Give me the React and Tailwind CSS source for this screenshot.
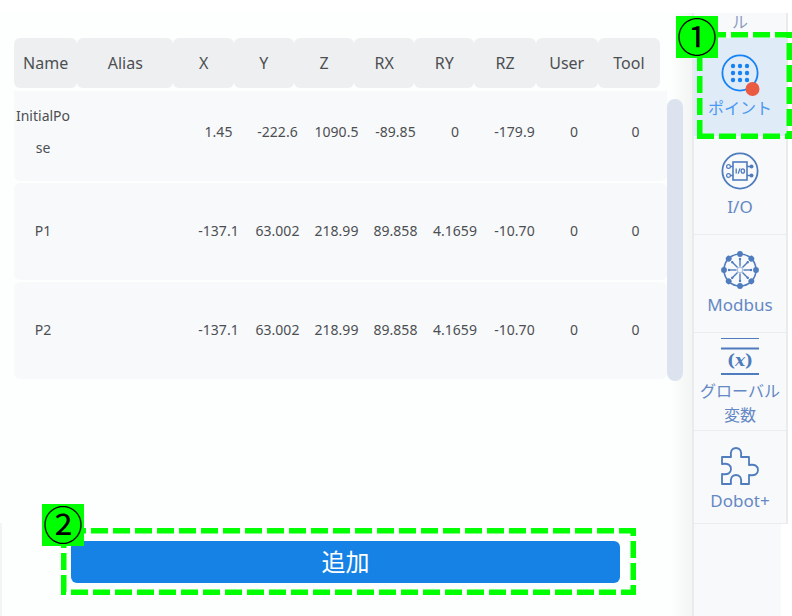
import clsx from 'clsx'

const COLUMNS = ['Name', 'Alias', 'X', 'Y', 'Z', 'RX', 'RY', 'RZ', 'User', 'Tool']

const POINTS = [
  { name: 'InitialPose', values: ['', '1.45', '-222.6', '1090.5', '-89.85', '0', '-179.9', '0', '0'] },
  { name: 'P1', values: ['', '-137.1', '63.002', '218.99', '89.858', '4.1659', '-10.70', '0', '0'] },
  { name: 'P2', values: ['', '-137.1', '63.002', '218.99', '89.858', '4.1659', '-10.70', '0', '0'] },
]

function PointIcon() {
  const steps = [-7, 0, 7]
  return (
    <svg width="38" height="38" viewBox="-19 -19 38 38" className="overflow-visible" aria-hidden="true">
      <circle r="17.6" fill="none" stroke="#1683f5" strokeWidth="1.8" />
      {steps.map((y) => steps.map((x) => <circle key={`${x},${y}`} cx={x} cy={y} r="2.2" fill="#1683f5" />))}
      <circle cx="12.5" cy="16" r="7" fill="#ea5b43" />
    </svg>
  )
}

function IoIcon() {
  return (
    <svg width="38" height="38" viewBox="-19 -19 38 38" fill="none" stroke="#4f7cbd" strokeWidth="1.5" aria-hidden="true">
      <circle r="17.6" strokeWidth="1.8" />
      <rect x="-7" y="-9" width="14" height="18" strokeWidth="1.6" />
      <path d="M-9.5 -4.5H-7M-9.5 4.5H-7M7 -4.5H11M7 4.5H11" />
      <circle cx="-11.5" cy="-4.5" r="1.9" strokeWidth="1.2" />
      <circle cx="-11.5" cy="4.5" r="1.9" strokeWidth="1.2" />
      <circle cx="11.5" cy="-4.5" r="2" fill="#4f7cbd" stroke="none" />
      <circle cx="11.5" cy="4.5" r="2" fill="#4f7cbd" stroke="none" />
      <path d="M-3.8 -2.6V2.6M-1.8 2.6L0 -2.6" strokeWidth="1.3" />
      <ellipse cx="2.8" rx="1.7" ry="2.2" strokeWidth="1.3" />
    </svg>
  )
}

function ModbusIcon() {
  const angles = [0, 45, 90, 135, 180, 225, 270, 315]
  return (
    <svg width="38" height="38" viewBox="-19 -19 38 38" fill="none" stroke="#4f7cbd" aria-hidden="true">
      <circle r="16" strokeWidth="1.6" />
      {angles.map((a) => (
        <g key={a} transform={`rotate(${a})`}>
          <path d="M3.5 0H11.5" strokeWidth="1.4" />
          <circle cx="11" r="1.2" fill="#4f7cbd" stroke="none" />
          <circle cx="16" r="2.9" fill="#4f7cbd" stroke="none" />
        </g>
      ))}
      <circle r="2.8" strokeWidth="0.5" />
    </svg>
  )
}

function VariableIcon() {
  return (
    <svg width="38" height="38" viewBox="0 0 38 38" stroke="#4f7cbd" aria-hidden="true">
      <path d="M0 1.5H38" strokeWidth="1.2" />
      <path d="M0 11.5H38M0 37H38" strokeWidth="2" />
      <text
        x="19"
        y="29"
        textAnchor="middle"
        fill="#4f7cbd"
        stroke="none"
        className="font-['DejaVu_Serif',serif] text-[17px] font-bold"
      >
        (<tspan fontStyle="italic">x</tspan>)
      </text>
    </svg>
  )
}

function PuzzleIcon() {
  return (
    <svg width="38" height="38" viewBox="0 0 38 38" fill="none" stroke="#4f7cbd" strokeWidth="1.8" strokeLinejoin="round" aria-hidden="true">
      <path d="M1 10H10C9 4 11 1 15 1S21 4 20 10H28V18C34 17 37 19 37 23S34 29 28 28V37H20C21 31 19 28 15 28S9 31 10 37H1V27C7 28 10 26 10 22S7 16 1 17Z" />
    </svg>
  )
}

// Dashed callout border, each side has its own dash phase
function DashFrame({ className, offsets }) {
  const [top, right, bottom, left] = offsets
  return (
    <svg
      className={clsx('pointer-events-none absolute overflow-hidden', className)}
      stroke="#00ff00"
      strokeWidth="11"
      strokeDasharray="17 5"
      aria-hidden="true"
    >
      <line x1="0" y1="0" x2="100%" y2="0" strokeDashoffset={top} />
      <line x1="100%" y1="0" x2="100%" y2="100%" strokeDashoffset={right} />
      <line x1="0" y1="100%" x2="100%" y2="100%" strokeDashoffset={bottom} />
      <line x1="0" y1="0" x2="0" y2="100%" strokeDashoffset={left} />
    </svg>
  )
}

function StepBadge({ className, children }) {
  return (
    <span
      className={clsx(
        "absolute flex h-[42px] w-[42px] items-center justify-center bg-[#00ff00] pb-1 font-['Noto_Sans_CJK_JP',sans-serif] text-[40px] leading-none text-black",
        className
      )}
    >
      {children}
    </span>
  )
}

function SideItem({ icon, label, active, className }) {
  return (
    <button
      type="button"
      className={clsx(
        'flex w-full flex-col items-center border-b leading-6',
        active ? 'border-[#e0ebf8] bg-[#e0ebf8] text-[#4b98f2]' : 'border-[#eaedf0] text-[#6488c4]',
        className
      )}
    >
      {icon}
      {label}
    </button>
  )
}

function PointTable() {
  return (
    <table className="block min-w-0 flex-1 text-[#4c4f52]">
      <thead className="block pr-[7px]">
        <tr className="grid grid-cols-[63fr_96fr_60fr_60fr_60fr_60fr_60fr_61fr_62fr_62fr]">
          {COLUMNS.map((col) => (
            <th key={col} scope="col" className="flex h-[50px] items-center justify-center rounded-md bg-[#eeeff1] text-base font-normal">
              {col}
            </th>
          ))}
        </tr>
      </thead>
      <tbody className="mt-[3px] flex flex-col gap-[2px]">
        {POINTS.map((point, i) => (
          <tr
            key={point.name}
            className={clsx(
              'grid grid-cols-[58fr_117fr_59fr_59fr_59fr_59fr_60fr_59fr_60fr_63fr] items-center bg-[#f8f9fb] text-sm',
              i === 0 ? 'h-[90px] rounded-b-md pb-[9px]' : 'h-[97px] rounded-md pb-[2px]'
            )}
          >
            <td className="text-center leading-8 break-all">{point.name}</td>
            {point.values.map((value, j) => (
              <td key={j} className="text-center">{value}</td>
            ))}
          </tr>
        ))}
      </tbody>
    </table>
  )
}

export default function App() {
  return (
    <div className="flex min-h-screen bg-white font-['Noto_Sans','Noto_Sans_CJK_JP',sans-serif]">
      <main className="mt-[13px] flex min-w-0 flex-1 flex-col bg-[linear-gradient(to_right,#fdfefe_calc(100%-22px),#f3f4f4)]">
        <div className="flex pt-[25px] pr-[9px] pl-[14px]">
          <PointTable />
          <div className="mt-[61px] -mb-[2px] w-4 rounded-full bg-[#dce3ee]" />
        </div>

        {/* Add button */}
        <div className="mt-auto border-l-2 border-[#f3f4f6] pt-[5px] pr-14 pb-[21px] pl-[59px]">
          <div className="relative pt-[13px] pr-4 pb-[12px] pl-[10px]">
            <button type="button" className="flex h-[42px] w-full items-center justify-center rounded-md bg-[#1782e6] text-2xl text-white">
              追加
            </button>
            <DashFrame className="inset-0 h-full w-full" offsets={[14, 9, 12, 19]} />
            <StepBadge className="-top-6 -left-[19px]">②</StepBadge>
          </div>
        </div>
      </main>

      {/* Side menu */}
      <aside className="mt-[13px] mr-1 flex w-24 shrink-0 flex-col">
        <nav className="flex flex-col border-x-2 border-[#eaebed] bg-[#f8f9fb] text-base">
          <button type="button" className="flex h-[25px] items-end justify-center pb-1 leading-6 text-[#8b9dc3]">
            ル
          </button>
          <div className="relative">
            <SideItem active label="ポイント" icon={<PointIcon />} className="h-[98px] gap-1 pt-4" />
            <DashFrame className="top-[-6px] left-[3px] h-[107px] w-[95px]" offsets={[10, 11, 0, 0]} />
            <StepBadge className="-top-[22px] -left-[18px]">①</StepBadge>
          </div>
          <SideItem label="I/O" icon={<IoIcon />} className="h-[99px] gap-[5px] pt-4 text-[17px]" />
          <SideItem label="Modbus" icon={<ModbusIcon />} className="h-[98px] gap-1 pt-4 text-[17px]" />
          <SideItem label={<span>グローバル<br />変数</span>} icon={<VariableIcon />} className="h-[98px] gap-1 pt-1" />
          <SideItem label="Dobot+" icon={<PuzzleIcon />} className="h-[93px] gap-1 pt-4 text-[17px]" />
        </nav>
        <div className="mr-[7px] flex-1 border-l-2 border-[#eaebed] bg-[#f8f9fb]" />
      </aside>
    </div>
  )
}
